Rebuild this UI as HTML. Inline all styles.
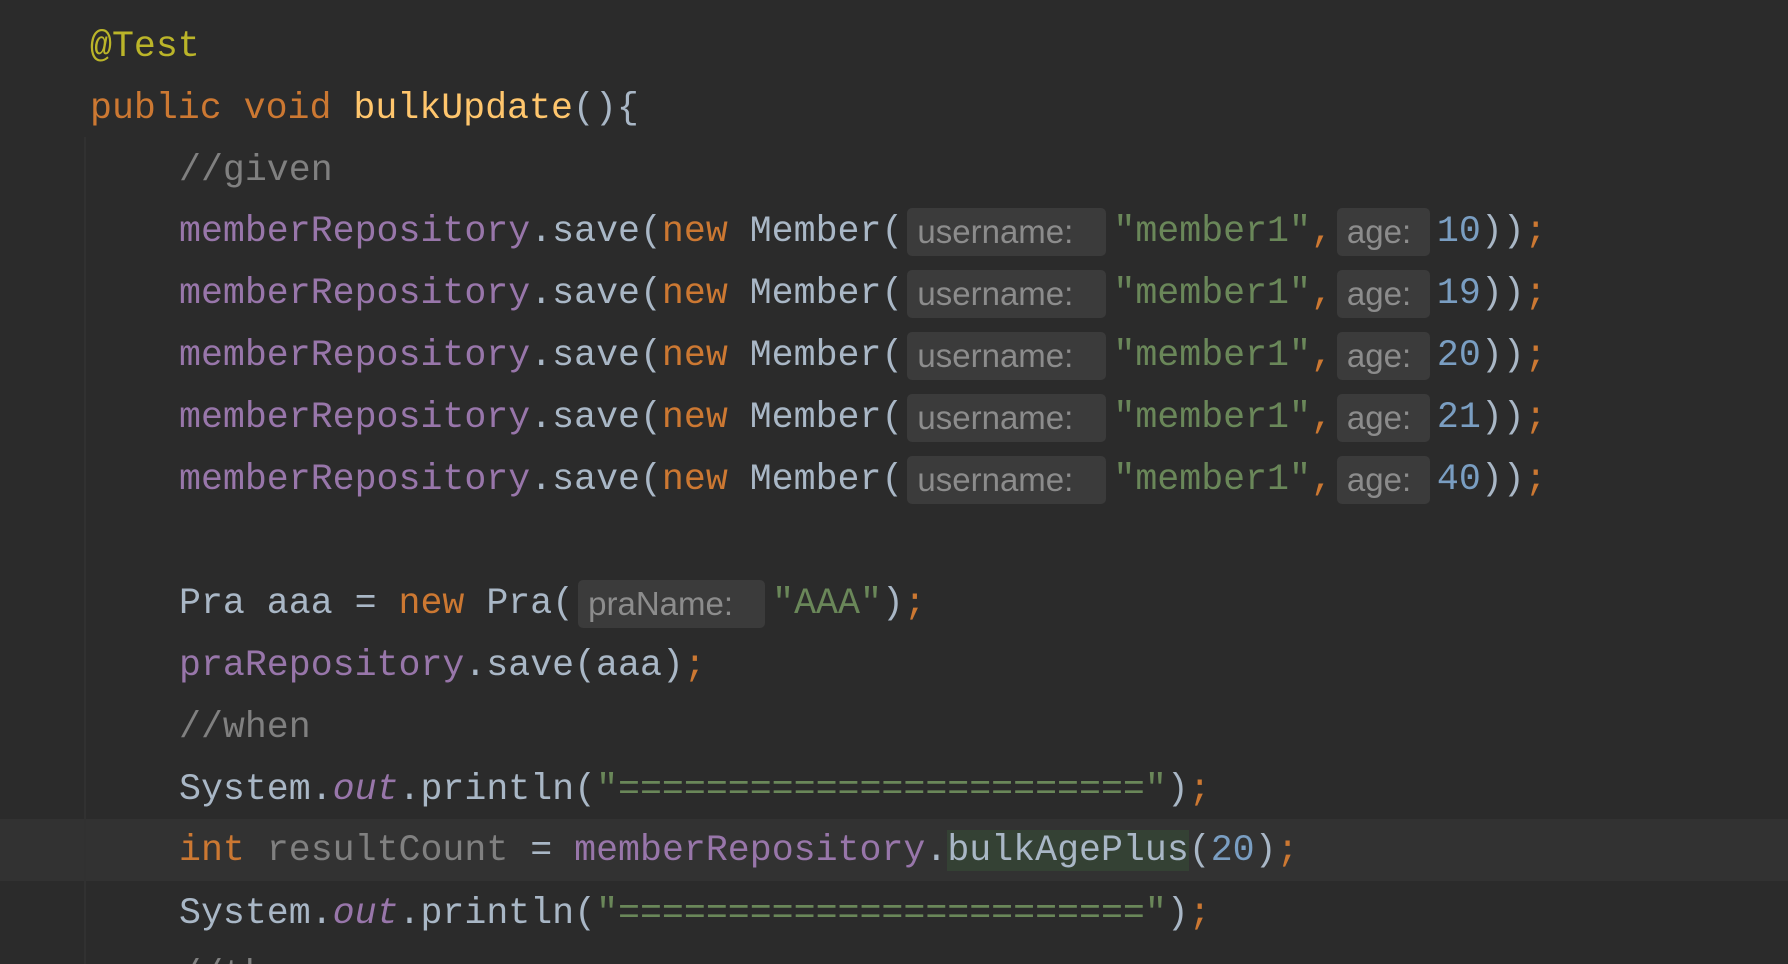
<!DOCTYPE html>
<html><head><meta charset="utf-8"><style>
html,body{margin:0;padding:0;background:#2b2b2b;width:1788px;height:964px;overflow:hidden;position:relative}
.l{position:absolute;left:90px;height:62px;line-height:62px;font-family:"Liberation Mono",monospace;font-size:36.6px;color:#a9b7c6;white-space:pre}
.in{left:179px}
.k{color:#cc7832}.f{color:#ffc66d}.a{color:#bbb529}.c{color:#808080}.p{color:#9876aa}.s{color:#6a8759}.n{color:#7a9ec2}.g{color:#808080}
.h{display:inline-block;vertical-align:top;margin-top:7px;height:48px;line-height:48px;background:#3b3b3b;color:#8c8c8c;font-family:"Liberation Sans",sans-serif;font-size:33px;border-radius:5px;text-align:left;padding-left:10px;box-sizing:border-box;margin-left:4px;margin-right:7px}
.hl{position:absolute;left:0;top:819px;width:1788px;height:62px;background:#323232}
.gut{position:absolute;left:84px;top:137px;width:2px;height:827px;background:#313131}
.ab{background:#344134}
i{font-style:italic}
</style></head><body>
<div class="hl"></div>
<div class="gut"></div>
<div class="l a" style="top:16px">@Test</div>
<div class="l" style="top:78px"><span class="k">public void </span><span class="f">bulkUpdate</span>(){</div>
<div class="l in c" style="top:140px">//given</div>
<div class="l in" style="top:201px"><span class="p">memberRepository</span>.save(<span class="k">new </span>Member(<span class="h" style="width:199px">username:</span><span class="s">"member1"</span><span class="k">,</span><span class="h" style="width:93px">age:</span><span class="n">10</span>))<span class="k">;</span></div>
<div class="l in" style="top:263px"><span class="p">memberRepository</span>.save(<span class="k">new </span>Member(<span class="h" style="width:199px">username:</span><span class="s">"member1"</span><span class="k">,</span><span class="h" style="width:93px">age:</span><span class="n">19</span>))<span class="k">;</span></div>
<div class="l in" style="top:325px"><span class="p">memberRepository</span>.save(<span class="k">new </span>Member(<span class="h" style="width:199px">username:</span><span class="s">"member1"</span><span class="k">,</span><span class="h" style="width:93px">age:</span><span class="n">20</span>))<span class="k">;</span></div>
<div class="l in" style="top:387px"><span class="p">memberRepository</span>.save(<span class="k">new </span>Member(<span class="h" style="width:199px">username:</span><span class="s">"member1"</span><span class="k">,</span><span class="h" style="width:93px">age:</span><span class="n">21</span>))<span class="k">;</span></div>
<div class="l in" style="top:449px"><span class="p">memberRepository</span>.save(<span class="k">new </span>Member(<span class="h" style="width:199px">username:</span><span class="s">"member1"</span><span class="k">,</span><span class="h" style="width:93px">age:</span><span class="n">40</span>))<span class="k">;</span></div>
<div class="l in" style="top:573px">Pra aaa = <span class="k">new </span>Pra(<span class="h" style="width:187px">praName:</span><span class="s">"AAA"</span>)<span class="k">;</span></div>
<div class="l in" style="top:635px"><span class="p">praRepository</span>.save(aaa)<span class="k">;</span></div>
<div class="l in c" style="top:697px">//when</div>
<div class="l in" style="top:759px">System.<i class="p">out</i>.println(<span class="s">"========================"</span>)<span class="k">;</span></div>
<div class="l in" style="top:820px"><span class="k">int </span><span class="g">resultCount</span> = <span class="p">memberRepository</span>.<span class="ab">bulkAgePlus</span>(<span class="n">20</span>)<span class="k">;</span></div>
<div class="l in" style="top:883px">System.<i class="p">out</i>.println(<span class="s">"========================"</span>)<span class="k">;</span></div>
<div class="l in c" style="top:945px">//then</div>
</body></html>
